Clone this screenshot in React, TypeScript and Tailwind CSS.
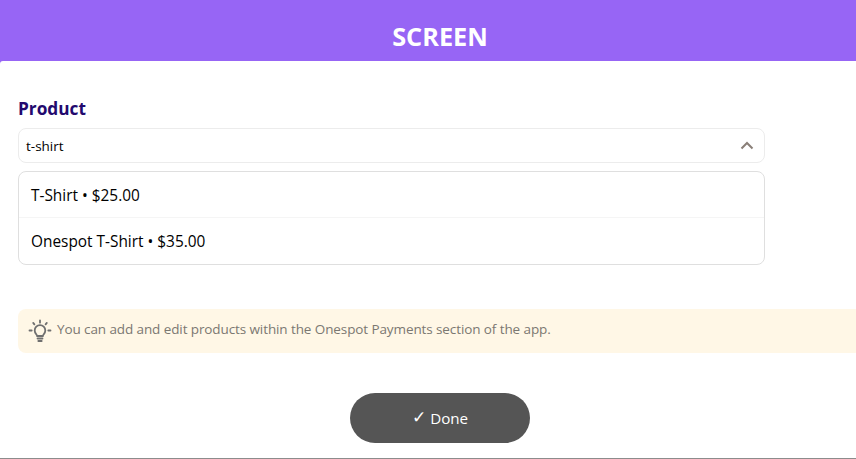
const FONT = "font-['Open_Sans','Noto_Sans',sans-serif]";

const OPTIONS = ['T-Shirt • $25.00', 'Onespot T-Shirt • $35.00'];

function BulbIcon() {
  return (
    <svg width="24" height="24" viewBox="0 0 24 24" fill="none" stroke="#6f6f6f" strokeWidth="1.8" strokeLinecap="round">
      <path d="M12 1.5v2.2M5.2 3.9l1.2 1.5M18.8 3.9l-1.2 1.5M1.5 11.5h2.2M20.3 11.5h2.2" />
      <path d="M9.2 17c-.3-1.6-2.5-2.7-2.5-5.6a5.3 5.3 0 0 1 10.6 0c0 2.9-2.2 4-2.5 5.6z" />
      <path d="M9.6 19.6h4.8M10.4 22h3.2" strokeWidth="2" />
    </svg>
  );
}

function ChevronUp() {
  return (
    <svg width="14" height="9" viewBox="0 0 14 9" fill="none" stroke="#8a7f78" strokeWidth="2">
      <path d="M1.5 7.5 7 2l5.5 5.5" />
    </svg>
  );
}

export default function App() {
  return (
    <div className="h-[459px] w-[856px] overflow-hidden">
      <div className={`${FONT} h-[459px] w-[880px] bg-[#9765f5]`}>
        <div className="flex h-[61px] items-center justify-center pt-[13px] text-[25.3px] font-bold text-white">
          SCREEN
        </div>
        <div className="h-[398px] rounded-t-[3px] border-b border-[#8c8c8c] bg-white">
          <div className="ml-[18px] w-[747px] pt-[36px]">
            <div className="text-[17.25px] leading-[24px] font-bold text-[#23096e]">Product</div>
            <div className="mt-[7px] flex h-[35px] items-center justify-between rounded-lg border border-[#ececec] pl-[7px] pr-[10px] text-[13.5px] text-black">
              <span className="mt-[1px]">t-shirt</span>
              <ChevronUp />
            </div>
            <div className="mt-[8px] h-[94px] rounded-lg border border-[#dfdfdf] text-[15.4px] text-black">
              {OPTIONS.map((o, i) => (
                <div
                  key={o}
                  className={`flex h-[46px] items-center pl-3 pt-[2px] ${i === 0 ? 'border-b border-[#f5f5f5]' : ''}`}
                >
                  {o}
                </div>
              ))}
            </div>
          </div>
          <div className="mx-[18px] mt-[44px] flex h-[44px] items-center gap-[5px] rounded-lg bg-[#fff7e6] pl-[10px] text-[13.5px] tracking-[-0.1px] text-[#7b7872]">
            <BulbIcon />
            <span className="-mt-[3px]">You can add and edit products within the Onespot Payments section of the app.</span>
          </div>
          <div className="mt-[40px] flex justify-center">
            <button className="flex h-[50px] w-[180px] items-center justify-center gap-[4px] rounded-[25px] bg-[#555555] text-[15.2px] text-white">
              <span className="font-['DejaVu_Sans',sans-serif] text-[17px]">✓</span>
              <span className="mt-[1px]">Done</span>
            </button>
          </div>
        </div>
      </div>
    </div>
  );
}
